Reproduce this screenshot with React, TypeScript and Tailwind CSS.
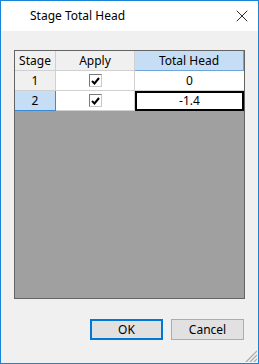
import { X } from "lucide-react";

const font = { fontFamily: '"Noto Sans", "Liberation Sans", sans-serif' };

function CheckBox() {
  return (
    <div className="flex h-[13px] w-[13px] items-center justify-center border border-t-[#7a7a7a] border-l-[#7a7a7a] border-r-[#c8c8c8] border-b-[#c8c8c8] bg-white">
      <svg width="9" height="8" viewBox="0 0 9 8">
        <path d="M1 4 L3.5 6.5 L8 1" fill="none" stroke="#000" strokeWidth="2" />
      </svg>
    </div>
  );
}

const rows = [
  { stage: "1", head: "0" },
  { stage: "2", head: "-1.4" },
];

export default function App() {
  return (
    <div
      className="flex h-[364px] w-[259px] flex-col border border-[#1883d7] bg-[#f0f0f0] text-[12px] text-black"
      style={font}
    >
      <div className="flex h-[30px] items-center justify-between bg-white pl-[29px] pr-[6px]">
        <span className="text-[12px]">Stage Total Head</span>
        <X className="h-[20px] w-[20px]" strokeWidth={1} />
      </div>

      <div className="mx-[13px] mt-[19px] flex h-[249px] w-[231px] flex-col border border-[#646464] bg-[#a0a0a0]">
        {/* header */}
        <div className="flex h-[20px]">
          <div className="flex w-[41px] items-center justify-center border-r border-b border-[#d0d0d0] bg-[#f0f0f0]">Stage</div>
          <div className="flex w-[79px] items-center justify-center border-r border-b border-[#d0d0d0] bg-[#f0f0f0]">Apply</div>
          <div className="flex flex-1 items-center justify-center border-b border-r border-[#6ea6d9] bg-[#c5def5]">Total Head</div>
        </div>
        {rows.map((r, i) => (
          <div key={r.stage} className="flex h-[20px]">
            <div
              className={
                i === 1
                  ? "flex w-[41px] items-center justify-center border-r border-b border-[#3c8ad6] bg-[#c5def5]"
                  : "flex w-[41px] items-center justify-center border-r border-b border-[#d0d0d0] bg-[#f0f0f0]"
              }
            >
              {r.stage}
            </div>
            <div className="flex w-[79px] items-center justify-center border-r border-b border-[#d0d0d0] bg-white">
              <CheckBox />
            </div>
            {i === 1 ? (
              <div className="flex flex-1 items-center justify-center border-2 border-black bg-white">{r.head}</div>
            ) : (
              <div className="flex flex-1 items-center justify-center border-b border-[#d0d0d0] bg-white">{r.head}</div>
            )}
          </div>
        ))}
      </div>

      <div className="mt-[20px] flex justify-end gap-[8px] pr-[14px]">
        <button className="h-[21px] w-[73px] border-2 border-[#0078d7] bg-[#e1e1e1] text-[12px]">OK</button>
        <button className="h-[21px] w-[73px] border border-[#adadad] bg-[#e1e1e1] text-[12px]">Cancel</button>
      </div>

      <div className="mt-auto flex justify-end pb-[1px] pr-[1px]">
        <svg width="12" height="12" viewBox="0 0 12 12">
          <path d="M12 1 L1 12 M12 5 L5 12 M12 9 L9 12" stroke="#a8a8a8" strokeWidth="1.2" />
        </svg>
      </div>
    </div>
  );
}
